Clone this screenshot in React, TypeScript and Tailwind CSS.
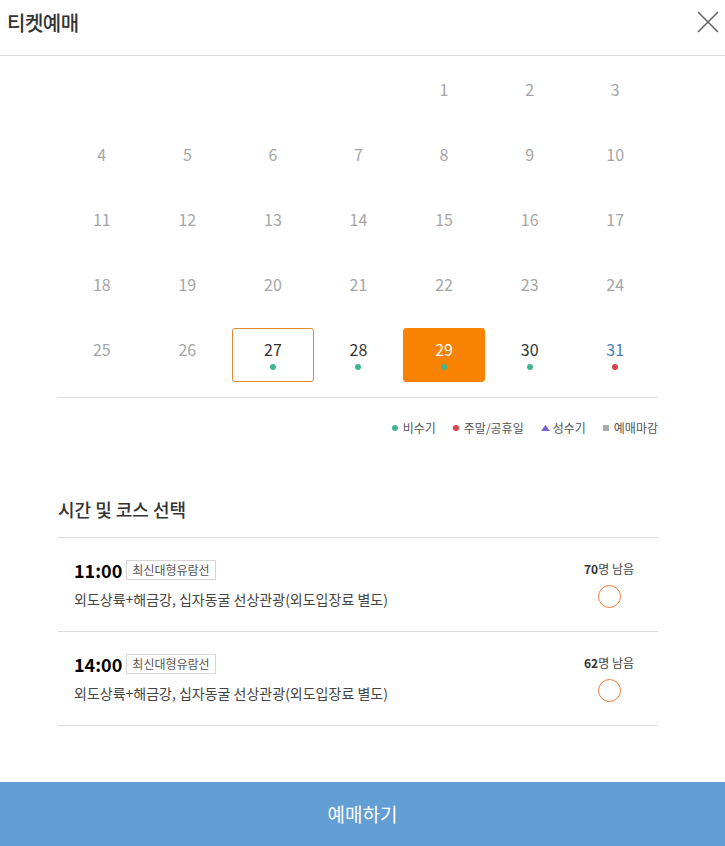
import React from 'react';

type Day = { n: number; state: 'past' | 'open' | 'today' | 'selected'; dot?: 'green' | 'red'; color?: string };

const font = { fontFamily: '"Noto Sans CJK KR", "Noto Sans", sans-serif' };

const days: (Day | null)[] = [
    null, null, null, null,
    ...Array.from({ length: 26 }, (_, i) => ({ n: i + 1, state: 'past' as const })),
    { n: 27, state: 'today', dot: 'green' },
    { n: 28, state: 'open', dot: 'green' },
    { n: 29, state: 'selected', dot: 'green' },
    { n: 30, state: 'open', dot: 'green' },
    { n: 31, state: 'open', dot: 'red', color: 'blue' },
];

const courses = [
    { time: '11:00', left: 70 },
    { time: '14:00', left: 62 },
];

const DayCell = ({ day }: { day: Day | null }) => {
    if (!day) return <div className="h-[65px]" />;
    const box =
        day.state === 'today'
            ? 'border border-[#e08a2c] bg-white'
            : day.state === 'selected'
            ? 'bg-[#f98200] border border-[#f98200]'
            : 'border border-transparent';
    const text =
        day.state === 'past'
            ? 'text-[#a6a6a6]'
            : day.state === 'selected'
            ? 'text-white'
            : day.color === 'blue'
            ? 'text-[#4d7fb3]'
            : 'text-[#333]';
    return (
        <div className="h-[65px] px-[2px] py-[5px]">
            <div className={`h-[54px] rounded-[3px] flex flex-col items-center pt-[8px] ${box}`}>
                <span className={`text-[16px] leading-[24px] ${text}`}>{day.n}</span>
                {day.dot && (
                    <span
                        className={`mt-[3px] w-[6px] h-[6px] rounded-full ${day.dot === 'green' ? 'bg-[#3fb68e]' : 'bg-[#d8434e]'}`}
                    />
                )}
            </div>
        </div>
    );
};

export default function App() {
    return (
        <div className="w-[725px] h-[846px] bg-white flex flex-col" style={font}>
            {/* Header */}
            <div className="h-[56px] border-b border-[#dcdcdc] flex items-center justify-between pl-[7px] pr-[6px] shrink-0">
                <h1 className="text-[20px] text-[#333] font-medium tracking-[-0.5px] -mt-[10px]">티켓예매</h1>
                <svg width="22" height="22" viewBox="0 0 22 22" className="-mt-[12px]">
                    <path d="M1 1L21 21M21 1L1 21" stroke="#666" strokeWidth="1.6" />
                </svg>
            </div>

            <div className="flex-1 pl-[58px] pr-[67px] pt-[7px]">
                {/* Calendar */}
                <div className="grid grid-cols-7 pb-[9px] border-b border-[#dedede] pl-[1px]">
                    {days.map((d, i) => (
                        <DayCell key={i} day={d} />
                    ))}
                </div>

                {/* Legend */}
                <div className="flex justify-end items-center gap-[17px] mt-[20px] text-[12px] text-[#555] leading-[20px]">
                    <span className="flex items-center gap-[5px]">
                        <span className="w-[6px] h-[6px] rounded-full bg-[#3fb68e]" />비수기
                    </span>
                    <span className="flex items-center gap-[5px]">
                        <span className="w-[6px] h-[6px] rounded-full bg-[#d8434e]" />주말/공휴일
                    </span>
                    <span className="flex items-center gap-[3px]">
                        <svg width="9" height="6" viewBox="0 0 9 6">
                            <path d="M4.5 0L9 6H0Z" fill="#7a64d4" />
                        </svg>
                        성수기
                    </span>
                    <span className="flex items-center gap-[5px]">
                        <span className="w-[6px] h-[6px] bg-[#aaa]" />예매마감
                    </span>
                </div>

                {/* Time & course */}
                <h2 className="mt-[59px] text-[18px] text-[#333] font-medium leading-[24px]">시간 및 코스 선택</h2>
                <div className="mt-[16px] border-t border-[#dcdcdc]">
                    {courses.map(c => (
                        <div key={c.time} className="h-[94px] border-b border-[#dcdcdc] flex items-start justify-between pl-[16px] pr-[24px] pt-[20px]">
                            <div>
                                <div className="flex items-center gap-[4px]">
                                    <span className="text-[18px] font-bold text-black leading-[24px]">{c.time}</span>
                                    <span className="border border-[#d6d6d6] text-[12px] text-[#555] px-[5px] leading-[18px]">최신대형유람선</span>
                                </div>
                                <p className="mt-[7px] text-[14px] text-[#444] leading-[20px]">외도상륙+해금강, 십자동굴 선상관광(외도입장료 별도)</p>
                            </div>
                            <div className="flex flex-col items-center pt-[2px]">
                                <span className="text-[12px] text-[#444] leading-[18px]">
                                    <b className="text-[#333]">{c.left}</b>명 남음
                                </span>
                                <span className="mt-[7px] w-[23px] h-[23px] rounded-full border-[1.5px] border-[#ec7d3a]" />
                            </div>
                        </div>
                    ))}
                </div>
            </div>

            {/* Submit */}
            <button className="h-[64px] w-full bg-[#629dd4] text-white text-[19px] shrink-0">예매하기</button>
        </div>
    );
}
